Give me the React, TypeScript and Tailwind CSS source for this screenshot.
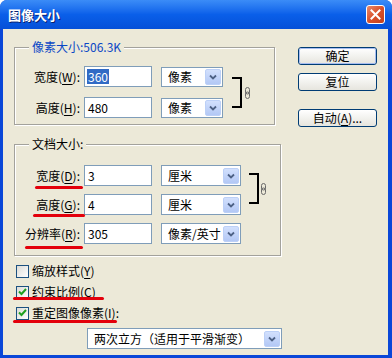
import React from 'react'

const cjk = "font-['Noto_Sans_CJK_SC',sans-serif]"

function Label({ text, hot, tail = '):', className = '' }: { text: string; hot: string; tail?: string; className?: string }) {
  return (
    <span className={`text-right text-[12px] leading-[14px] text-black ${className}`}>
      {text}(<span className="underline underline-offset-2">{hot}</span>{tail}
    </span>
  )
}

function DropArrow() {
  return (
    <div className="flex h-[16px] w-[16px] items-center justify-center rounded-[2px] border border-[#bcd0f7] bg-gradient-to-b from-[#d2e0fd] to-[#b3c8f5]">
      <svg width="8" height="6" viewBox="0 0 8 6">
        <polyline points="1,1.5 4,4.5 7,1.5" fill="none" stroke="#4d6185" strokeWidth="1.8" />
      </svg>
    </div>
  )
}

function Select({ value, width, height = 'h-[20px]' }: { value: string; width: string; height?: string }) {
  return (
    <div className={`flex ${width} ${height} items-center justify-between border border-[#7f9db9] bg-white pl-[6px] pr-[1px]`}>
      <span className="text-[12px] leading-[14px] text-black">{value}</span>
      <DropArrow />
    </div>
  )
}

function Input({ value, selected = false }: { value: string; selected?: boolean }) {
  return (
    <div className="flex h-[21px] w-[68px] items-center border border-[#7f9db9] bg-white pl-[2px]">
      <span className={`px-px text-[12px] leading-[15px] ${selected ? 'bg-[#316ac5] text-white' : 'text-black'}`}>{value}</span>
    </div>
  )
}

function Chain() {
  return (
    <svg width="5" height="12" viewBox="0 0 5 12">
      <rect x="0.5" y="0.5" width="4" height="6.5" rx="2" fill="none" stroke="#6a6a6a" />
      <rect x="0.5" y="5" width="4" height="6.5" rx="2" fill="none" stroke="#6a6a6a" />
    </svg>
  )
}

function Bracket({ height }: { height: string }) {
  return <div className={`w-[10px] ${height} border-y-[2px] border-r-[2px] border-black`} />
}

function Check({ checked }: { checked: boolean }) {
  return (
    <div className="flex h-[13px] w-[13px] items-center justify-center border border-[#1c5180] bg-gradient-to-br from-[#dcdcd7] to-white">
      {checked && (
        <svg width="9" height="8" viewBox="0 0 9 8">
          <polyline points="1,3.5 3.5,6 8,1" fill="none" stroke="#21a121" strokeWidth="2" />
        </svg>
      )}
    </div>
  )
}

function XpButton({ children, primary = false }: { children: React.ReactNode; primary?: boolean }) {
  return (
    <div className="flex h-[18px] w-[79px] items-center justify-center rounded-[3px] border border-[#003c74] bg-gradient-to-b from-white to-[#e6e5de]">
      <div className={`flex h-full w-full items-center justify-center rounded-[2px] ${primary ? 'border border-[#a7bdf0]' : ''}`}>
        <span className="text-[12px] leading-[14px] text-black">{children}</span>
      </div>
    </div>
  )
}

function GroupBox({ title, blue = false, className, children }: { title: string; blue?: boolean; className: string; children: React.ReactNode }) {
  return (
    <div className={`relative border border-[#a3a29c] shadow-[inset_1px_1px_0_#fff,1px_1px_0_#fff] ${className}`}>
      <span className={`absolute -top-[8px] left-[14px] bg-[#ece9d8] px-[3px] text-[12px] leading-[14px] ${blue ? 'text-[#0b47c6]' : 'text-black'}`}>
        {title}
      </span>
      {children}
    </div>
  )
}

function Mark({ className }: { className: string }) {
  return <div className={`absolute h-[3px] rounded-full bg-[#e3000b] ${className}`} />
}

export default function App() {
  return (
    <div className={`relative h-[358px] w-[392px] bg-white ${cjk}`}>
      <div className="flex h-full w-full flex-col rounded-t-[7px] bg-[#0a47d8] pb-[3px] pl-[3px] pr-[4px]">
        {/* Title bar */}
        <div className="-ml-[3px] -mr-[4px] flex h-[29px] items-center justify-between rounded-t-[7px] bg-gradient-to-b from-[#3b8cf7] via-[#0a5fe9] to-[#0550d8] pl-[8px] pr-[7px]">
          <span className="text-[13px] font-bold leading-[15px] text-white [text-shadow:1px_1px_0_#0a1f6e]">图像大小</span>
          <div className="flex h-[19px] w-[19px] items-center justify-center rounded-[3px] border border-white bg-gradient-to-br from-[#e8896a] via-[#d9502a] to-[#c1401c]">
            <svg width="11" height="11" viewBox="0 0 11 11">
              <path d="M1.5 1.5 L9.5 9.5 M9.5 1.5 L1.5 9.5" stroke="#fff" strokeWidth="2" strokeLinecap="square" />
            </svg>
          </div>
        </div>

        {/* Body */}
        <div className="flex flex-1 bg-[#ece9d8] pl-[10px] pt-[18px]">
          <div className="flex w-[268px] flex-col">
            <GroupBox title="像素大小:506.3K" blue className="ml-px h-[78px] w-[261px]">
              <div className="flex items-start pt-[18px]">
                <div className="flex flex-col gap-[10px]">
                  <div className="flex items-center">
                    <Label text="宽度" hot="W" className="w-[66px] pr-[1px]" />
                    <div className="ml-[3px]"><Input value="360" selected /></div>
                    <div className="ml-[9px]"><Select value="像素" width="w-[62px]" /></div>
                  </div>
                  <div className="flex items-center">
                    <Label text="高度" hot="H" className="w-[66px] pr-[1px]" />
                    <div className="ml-[3px]"><Input value="480" /></div>
                    <div className="ml-[9px]"><Select value="像素" width="w-[62px]" /></div>
                  </div>
                </div>
                <div className="ml-[9px] mt-[11px] flex items-center">
                  <Bracket height="h-[31px]" />
                  <div className="ml-[3px]"><Chain /></div>
                </div>
              </div>
            </GroupBox>

            <GroupBox title="文档大小:" className="ml-px mt-[19px] h-[112px] w-[267px]">
              <div className="flex items-start pt-[20px]">
                <div className="flex flex-col gap-[8px]">
                  <div className="flex items-center">
                    <Label text="宽度" hot="D" className="w-[66px] pr-[1px]" />
                    <div className="ml-[3px]"><Input value="3" /></div>
                    <div className="ml-[9px]"><Select value="厘米" width="w-[80px]" height="h-[21px]" /></div>
                  </div>
                  <div className="flex items-center">
                    <Label text="高度" hot="G" className="w-[66px] pr-[1px]" />
                    <div className="ml-[3px]"><Input value="4" /></div>
                    <div className="ml-[9px]"><Select value="厘米" width="w-[80px]" height="h-[21px]" /></div>
                  </div>
                  <div className="flex items-center">
                    <Label text="分辨率" hot="R" className="w-[66px] pr-[1px]" />
                    <div className="ml-[3px]"><Input value="305" /></div>
                    <div className="ml-[9px]"><Select value="像素/英寸" width="w-[80px]" height="h-[21px]" /></div>
                  </div>
                </div>
                <div className="ml-[8px] mt-[8px] flex items-center">
                  <Bracket height="h-[31px]" />
                  <div className="ml-[2px]"><Chain /></div>
                </div>
              </div>
            </GroupBox>

            <div className="ml-[3px] mt-[8px] flex flex-col gap-[7px]">
              <div className="flex items-center gap-[3px]">
                <Check checked={false} />
                <Label text="缩放样式" hot="Y" tail=")" />
              </div>
              <div className="flex items-center gap-[3px]">
                <Check checked />
                <Label text="约束比例" hot="C" tail=")" />
              </div>
              <div className="flex items-center gap-[3px]">
                <Check checked />
                <Label text="重定图像像素" hot="I" />
              </div>
            </div>

            <div className="ml-[74px] mt-[8px]">
              <Select value="两次立方（适用于平滑渐变）" width="w-[195px]" height="h-[21px]" />
            </div>
          </div>

          <div className="ml-[17px] flex flex-col">
            <XpButton primary>确定</XpButton>
            <div className="mt-[8px]"><XpButton>复位</XpButton></div>
            <div className="mt-[18px]"><XpButton>自动(<span className="underline underline-offset-2">A</span>)...</XpButton></div>
          </div>
        </div>
      </div>

      {/* red annotation strokes */}
      <Mark className="left-[35px] top-[186px] w-[48px]" />
      <Mark className="left-[33px] top-[214px] w-[52px]" />
      <Mark className="left-[25px] top-[246px] w-[58px]" />
      <Mark className="left-[13px] top-[297px] w-[91px]" />
      <Mark className="left-[13px] top-[320px] w-[104px]" />
    </div>
  )
}
